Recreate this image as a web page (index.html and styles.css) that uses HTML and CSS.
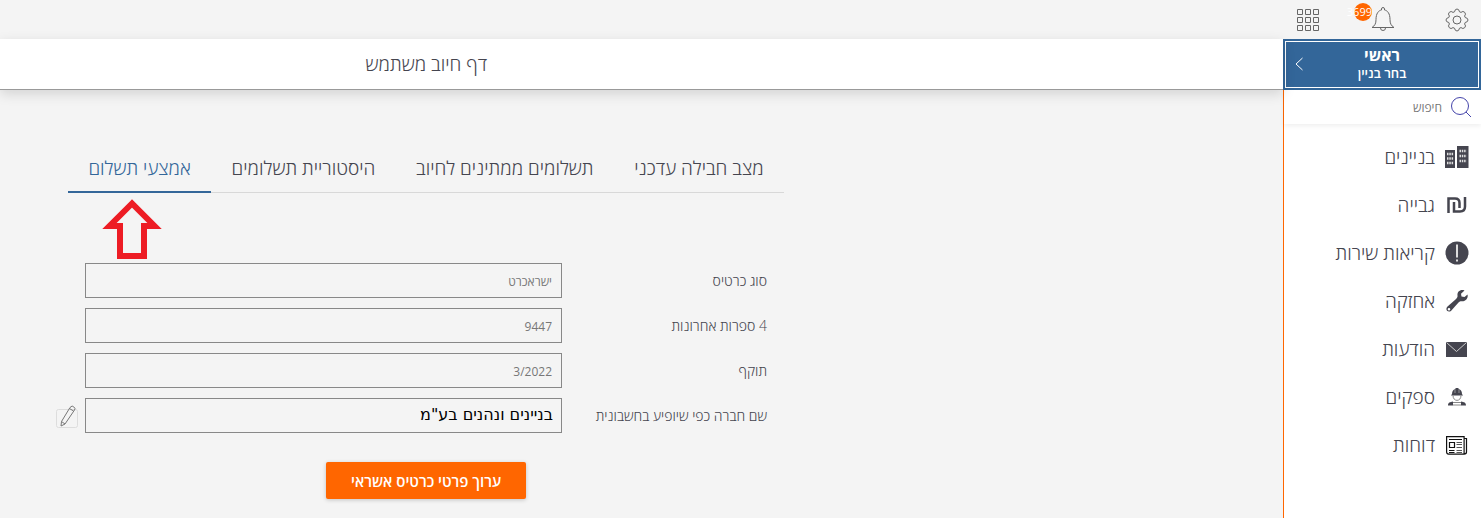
FILE: index.html
```html
<!DOCTYPE html>
<html lang="he" dir="rtl">
<head>
<meta charset="utf-8">
<title>דף חיוב משתמש</title>
<link rel="stylesheet" href="styles.css">
</head>
<body>
<header class="topbar">
  <button class="tool gear" aria-label="הגדרות"><svg width="24" height="24" viewBox="0 0 24 24"><circle cx="12" cy="12" r="4"/><path d="M9.500 3.800Q10 1 12 1t2.500 2.800l1.500.6Q18 2.500 19.700 4.300T19.600 8l.6 1.500Q23 10 23 12t-2.800 2.500l-.6 1.500q1.900 2 .1 3.700T16 19.600l-1.500.6Q14 23 12 23t-2.500-2.800L8 19.600q-2 1.900-3.700.1T4.400 16l-.6-1.500Q1 14 1 12t2.800-2.500L4.400 8Q2.500 6 4.300 4.300T8 4.400z"/></svg></button>
  <button class="tool bell" aria-label="התראות"><svg width="24" height="25" viewBox="0 0 24 25"><path d="M1 20.500c3-2 4-4 4-8 0-6 2.500-9 5.500-9.500V2a1.500 1.500 0 0 1 3 0v1c3 .5 5.500 3.500 5.500 9.500 0 4 1 6 4 8zM9.500 21a2.500 2.500 0 0 0 5 0"/></svg><span class="badge">3699</span></button>
  <button class="tool apps" aria-label="יישומים"><svg width="24" height="24" viewBox="0 0 24 24"><path d="M1.500 1.500h5v5h-5zM9.500 1.500h5v5h-5zM17.500 1.500h5v5h-5zM1.500 9.500h5v5h-5zM9.500 9.500h5v5h-5zM17.500 9.500h5v5h-5zM1.500 17.500h5v5h-5zM9.500 17.500h5v5h-5zM17.500 17.500h5v5h-5z"/></svg></button>
</header>
<div class="shell">
  <aside class="sidebar">
    <button class="building"><span class="names"><strong>ראשי</strong><span>בחר בניין</span></span><svg class="chevron" width="8" height="14" viewBox="0 0 8 14"><path d="M7.500 1L1 7l6.500 6"/></svg></button>
    <div class="panel">
    <label class="search"><svg width="22" height="22" viewBox="0 0 22 22"><circle cx="10" cy="10" r="8.500"/><path d="M16 16l5 5"/></svg><input type="search" placeholder="חיפוש" aria-label="חיפוש"></label>
    <nav class="menu">
      <a href="#"><svg width="24" height="24" viewBox="0 0 24 24"><path fill="#45454f" d="M0 5h10v18H0zM12 1h11.500v22H12z"/><path stroke="#ddd" stroke-width="2.500" stroke-dasharray="1.500 .8" d="M2 9h6.500M2 13.500h6.500M2 18h6.500M14.500 6h7M14.500 11h7M14.500 16h7"/></svg>בניינים</a>
      <a href="#"><svg width="24" height="24" viewBox="0 0 24 24"><path fill="none" stroke="#45454f" stroke-width="2.500" d="M3.500 20V5.500H10q4.500 0 4.500 4.500v5M9 9v9.500h6q5 0 5-5V4"/></svg>גבייה</a>
      <a href="#"><svg width="24" height="24" viewBox="0 0 24 24"><circle cx="12" cy="12" r="11.500" fill="#45454f"/><path stroke="#ddd" stroke-width="2" d="M12 3.500V16.500M12 18.500v2"/></svg>קריאות שירות</a>
      <a href="#"><svg width="24" height="24" viewBox="0 0 24 24"><path fill="#45454f" fill-rule="evenodd" d="M19.500 1.500c-4-1.500-7.500 1-7 5 .3 1.500-.5 2.500-2 4L2.500 17.500c-2 2-1 5 1.500 5 1.200 0 2-.5 2.800-1.500l6.700-7.500c1-1 2-1.300 3.500-1.200 4 0 6.500-3.500 5.500-6.800L19.500 8l-3-.5-.5-2.800zM4 19a1.300 1.300 0 1 1 0 2.600A1.300 1.300 0 0 1 4 19z"/></svg>אחזקה</a>
      <a href="#"><svg width="24" height="24" viewBox="0 0 24 24"><path fill="#45454f" d="M1 5h21v15H1z"/><path fill="none" stroke="#ccc" d="M1.500 5.500l10 9 10-9"/></svg>הודעות</a>
      <a href="#"><svg width="24" height="24" viewBox="0 0 24 24"><path fill="#45454f" d="M7 9c0-3 1.500-4.500 3.500-5V3h3v1c2 .5 3.500 2 3.500 5l1 1.500H6zM3 20.500c0-3 2-3.500 5-4v4zM21 20.500c0-3-2-3.500-5-4v4z"/><path fill="none" stroke="#888" d="M8 10.500c0 6.500 8 6.500 8 0M8 17.500h8M8 20h8"/><path stroke="#ccc" stroke-width=".6" d="M10 4.500v3.500M14 4.500v3.500"/></svg>ספקים</a>
      <a href="#"><svg width="24" height="24" viewBox="0 0 24 24" fill="none" stroke="#111"><path stroke-width="1.200" d="M1.600 3.600h17.500v17.500H3.600q-2 0-2-2zM19 5.500h2.500v13.500q0 2-2.400 2"/><path stroke-width="1.200" d="M4.500 9.500h5v5h-5z"/><path d="M4 6.500h13M4 17.500h5.500M4 19.500h5.500"/><path stroke="#555" d="M11.500 9.500H17M11.500 11.500H17M11.500 14.500H17M11.500 17.500H17M11.500 19.500H17"/></svg>דוחות</a>
    </nav>
    </div>
  </aside>
  <main class="main">
    <div class="titlebar"><h1>דף חיוב משתמש</h1></div>
    <section class="content">
      <nav class="tabs">
        <a href="#">מצב חבילה עדכני</a>
        <a href="#">תשלומים ממתינים לחיוב</a>
        <a href="#">היסטוריית תשלומים</a>
        <a href="#" class="active" aria-current="page">אמצעי תשלום</a>
      </nav>
      <svg class="arrow" width="60" height="61" viewBox="0 0 60 61"><path d="M30 4.500L7.500 27H18v30h24V27h10.500z"/></svg>
      <form class="form">
        <div class="row"><label for="type">סוג כרטיס</label><input id="type" value="ישראכרט" readonly></div>
        <div class="row"><label for="digits">4 ספרות אחרונות</label><input id="digits" value="9447" readonly></div>
        <div class="row"><label for="expiry">תוקף</label><input id="expiry" value="3/2022" readonly></div>
        <div class="row"><label for="company">שם חברה כפי שיופיע בחשבונית</label><input id="company" class="company" value='בניינים ונהנים בע"מ'><button type="button" class="edit" aria-label="עריכה"><svg width="22" height="24" viewBox="0 0 22 24"><rect x=".5" y="4.500" width="21" height="18" rx="2" stroke="#ddd"/><path stroke="#777" d="M14 2.500q2-3 4.500 0 1 1 0 2.500L9 19l-4 2 .5-4.500zM13.500 3.500l4 2.500M5.500 16.500L9 19"/></svg></button></div>
        <button type="button" class="submit">ערוך פרטי כרטיס אשראי</button>
      </form>
    </section>
  </main>
</div>
</body>
</html>
```
FILE: styles.css
```css
* { box-sizing: border-box; }
body {
  margin: 0;
  min-height: 100vh;
  display: flex;
  flex-direction: column;
  background: #f4f4f4;
  color: #45454f;
  font-family: "Open Sans", "Noto Sans", sans-serif;
  font-weight: 350;
}
button, input { font: inherit; color: inherit; }
button { border: 0; padding: 0; background: none; cursor: pointer; }
a { color: inherit; text-decoration: none; }
h1 { margin: 0; font-weight: inherit; }
svg { display: block; flex: none; fill: none; }

.topbar { height: 39px; display: flex; align-items: center; padding: 0 12px; }
.tool { position: relative; }
.tool svg { stroke: #666; }
.bell { margin-right: 50px; }
.apps { margin-right: 51px; }
.badge {
  position: absolute;
  top: -4px;
  right: 23px;
  width: 18px;
  height: 18px;
  border-radius: 50%;
  background: #f60;
  color: #fff;
  font-size: 11px;
  font-weight: 400;
  line-height: 18px;
  direction: ltr;
  display: flex;
  justify-content: flex-end;
}

.shell { flex: 1; display: flex; }
.sidebar { width: 198px; flex: none; display: flex; flex-direction: column; background: #fff; }
.building {
  height: 51px;
  display: flex;
  align-items: center;
  padding: 0 20px 2px 12px;
  background: #369;
  color: #fff;
  outline: 1px solid #fff;
  outline-offset: -3px;
}
.names { flex: 1; display: flex; flex-direction: column; font-size: 13px; line-height: 18px; font-weight: 600; }
.names strong { font-size: 16px; font-weight: 700; }
.chevron { stroke: #fff; }
.panel { flex: 1; border-left: 1px solid #f60; }
.search { height: 34px; display: flex; align-items: center; gap: 8px; padding: 0 9px; box-shadow: 0 2px 5px #0001; }
.search svg { stroke: #44a; }
.search input { flex: 1; min-width: 0; border: 0; padding: 0; outline: 0; background: none; font-size: 12px; font-weight: 400; }
.search input::placeholder { color: #777; opacity: 1; }
.menu { padding-top: 9px; }
.menu a { height: 48px; display: flex; align-items: center; gap: 10px; padding: 0 12px; font-size: 19px; }

.main { flex: 1; min-width: 0; }
.titlebar {
  height: 51px;
  display: flex;
  align-items: center;
  padding-right: 796px;
  background: #fff;
  border-bottom: 1px solid #999;
  box-shadow: 0 4px 12px #0002;
}
.titlebar h1 { font-size: 19px; white-space: nowrap; }
.content { width: 716px; margin: 54px auto 0 68px; position: relative; }
.tabs { display: flex; height: 49px; border-bottom: 1px solid #d8d8d8; white-space: nowrap; }
.tabs a { flex: 1 0 auto; height: 49px; padding: 0 19px; font-size: 19px; line-height: 48px; text-align: center; }
.tabs .active { color: #369; border-bottom: 2px solid #369; }
.arrow { position: absolute; left: 34px; top: 55px; stroke: #ed1c24; stroke-width: 6px; }
.form { padding: 70px 17px 0; display: flex; flex-direction: column; gap: 10px; }
.row { position: relative; display: flex; align-items: center; justify-content: space-between; font-size: 14px; }
.row input {
  width: 477px;
  height: 35px;
  padding: 2px 9px 0;
  border: 1px solid #888;
  border-radius: 0;
  background: #f4f4f4;
  color: #777;
  font-size: 12px;
  font-weight: 400;
}
.row .company { padding: 0 8px 3px; color: #000; font-family: "DejaVu Sans", sans-serif; font-size: 16px; }
.edit { position: absolute; left: -29px; top: 7px; }
.submit {
  width: 200px;
  height: 37px;
  margin: 19px auto 0 241px;
  border-radius: 2px;
  background: #f60;
  color: #fff;
  box-shadow: 0 1px 4px #0003;
  font-size: 15px;
  font-weight: 600;
}
```
